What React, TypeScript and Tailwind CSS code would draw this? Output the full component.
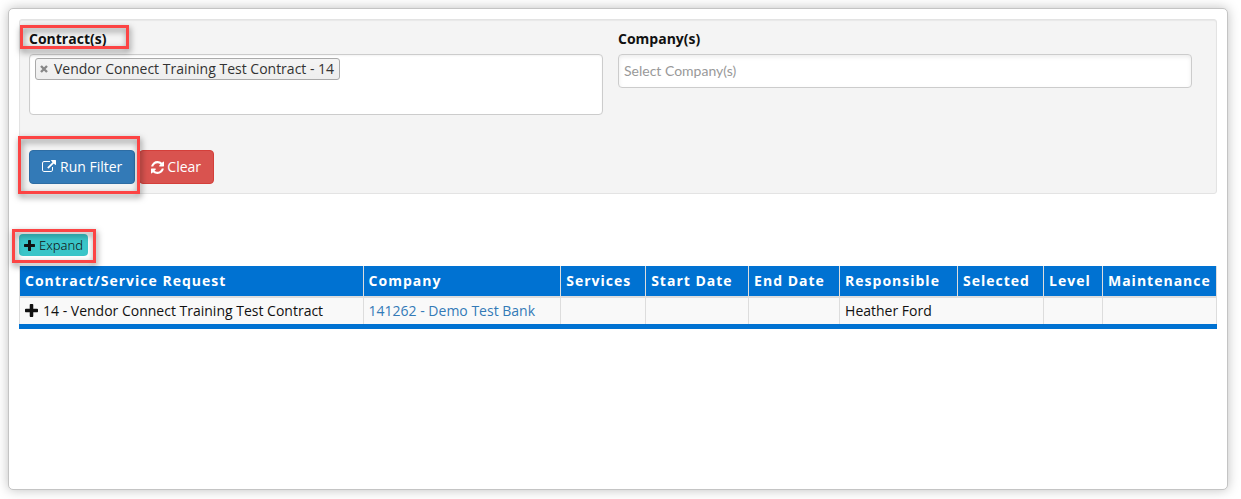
import React, { useState } from "react";

type IconProps = { className?: string };

function PlusIcon({ className }: IconProps) {
  return (
    <svg viewBox="192 128 1408 1408" className={className} fill="currentColor" aria-hidden="true">
      <path d="M1600 736v192q0 40-28 68t-68 28h-416v416q0 40-28 68t-68 28h-192q-40 0-68-28t-28-68v-416h-416q-40 0-68-28t-28-68v-192q0-40 28-68t68-28h416v-416q0-40 28-68t68-28h192q40 0 68 28t28 68v416h416q40 0 68 28t28 68z" />
    </svg>
  );
}

function RefreshIcon({ className }: IconProps) {
  return (
    <svg viewBox="128 128 1536 1536" className={className} fill="currentColor" aria-hidden="true">
      <path d="M1639 1056q0 5-1 7-64 268-268 434.500t-478 166.500q-146 0-282.500-55t-243.500-157l-129 129q-19 19-45 19t-45-19-19-45v-448q0-26 19-45t45-19h448q26 0 45 19t19 45-19 45l-137 137q71 66 161 102t187 36q134 0 250-65t186-179q11-17 53-117 8-23 30-23h192q13 0 22.500 9.500t9.500 22.500zm25-800v448q0 26-19 45t-45 19h-448q-26 0-45-19t-19-45 19-45l138-138q-148-137-349-137-134 0-250 65t-186 179q-11 17-53 117-8 23-30 23h-199q-13 0-22.500-9.500t-9.500-22.500v-7q65-268 270-434.500t480-166.500q146 0 284 55.500t245 156.500l130-129q19-19 45-19t45 19 19 45z" />
    </svg>
  );
}

function ExternalLinkIcon({ className }: IconProps) {
  return (
    <svg viewBox="0 0 1792 1792" className={className} fill="currentColor" aria-hidden="true">
      <path d="M1408 928v320q0 119-84.500 203.500t-203.500 84.500h-832q-119 0-203.500-84.500t-84.500-203.500v-832q0-119 84.500-203.500t203.500-84.500h704q14 0 23 9t9 23v64q0 14-9 23t-23 9h-704q-66 0-113 47t-47 113v832q0 66 47 113t113 47h832q66 0 113-47t47-113v-320q0-14 9-23t23-9h64q14 0 23 9t9 23zm384-864v512q0 26-19 45t-45 19-45-19l-176-176-652 652q-10 10-23 10t-23-10l-114-114q-10-10-10-23t10-23l652-652-176-176q-19-19-19-45t19-45 45-19h512q26 0 45 19t19 45z" />
    </svg>
  );
}

function CrossIcon({ className }: IconProps) {
  return (
    <svg viewBox="0 0 8 8" className={className} aria-hidden="true">
      <path d="M1 1l6 6M7 1l-6 6" stroke="currentColor" strokeWidth="2.400" fill="none" />
    </svg>
  );
}

const callout =
  "pointer-events-none absolute z-10 border-3 border-[#fc4444] drop-shadow-[1px_3px_3px_rgba(0,0,0,0.5)]";

const columns = [
  { title: "Contract/Service Request", width: "w-[344px]" },
  { title: "Company", width: "w-[198px]" },
  { title: "Services", width: "w-[85px]" },
  { title: "Start Date", width: "w-[103px]" },
  { title: "End Date", width: "w-[91px]" },
  { title: "Responsible", width: "w-[118px]" },
  { title: "Selected", width: "w-[86px]" },
  { title: "Level", width: "w-[59px]" },
  { title: "Maintenance", width: "w-[114px]" },
];

const cell = "border-x border-[#ddd] px-[5px]";

export default function App() {
  const [contracts, setContracts] = useState(["Vendor Connect Training Test Contract - 14"]);

  return (
    <div className="flex min-h-screen bg-white pt-2 pr-[13px] pb-[9px] pl-2 font-['Open_Sans',sans-serif] text-sm leading-5 text-[#111]">
      <main className="min-w-0 flex-1 rounded-[5px] border border-[#c4c4c4] bg-white p-2.5 shadow-[0_0_12px_rgba(0,0,0,0.25)]">
        <form
          className="rounded-[3px] border border-[#e3e3e3] bg-[#f4f4f4] pt-[9px] pr-6 pb-[9px] pl-[9px] shadow-[inset_0_1px_1px_rgba(0,0,0,0.05)]"
          onSubmit={(e) => e.preventDefault()}
        >
          <div className="grid grid-cols-2 gap-[15px]">
            <div>
              <div className="relative mb-[5px] w-fit">
                <label htmlFor="contracts" className="block font-bold">
                  Contract(s)
                </label>
                <span className={`${callout} -top-1 -right-[23px] bottom-0 -left-[9px]`} />
              </div>
              <div className="flex min-h-[61px] flex-wrap items-start rounded-[4px] border border-[#ccc] bg-white px-[5px] py-[3px] shadow-[inset_0_1px_2px_rgba(0,0,0,0.05)]">
                {contracts.map((name) => (
                  <span
                    key={name}
                    className="flex h-[22px] items-center gap-1.5 rounded-[3px] border border-[#aaa] bg-linear-to-b from-[#f4f4f4] to-[#eee] pr-[5px] pl-1 text-[#333]"
                  >
                    <button
                      type="button"
                      aria-label={`Remove ${name}`}
                      className="text-[#888]"
                      onClick={() => setContracts(contracts.filter((c) => c !== name))}
                    >
                      <CrossIcon className="size-2" />
                    </button>
                    {name}
                  </span>
                ))}
                <input id="contracts" type="text" className="h-[21px] w-10 bg-transparent px-1 outline-none" />
              </div>
            </div>
            <div>
              <label htmlFor="companies" className="mb-[5px] block w-fit font-bold">
                Company(s)
              </label>
              <input
                id="companies"
                type="text"
                placeholder="Select Company(s)"
                className="h-[34px] w-full rounded-[4px] border border-[#ccc] bg-white px-[5px] pb-0.5 font-['Lato',sans-serif] shadow-[inset_0_2px_4px_rgba(0,0,0,0.08)] outline-none placeholder:text-[#999]"
              />
            </div>
          </div>
          <div className="mt-[35px] flex gap-1">
            <div className="relative">
              <button
                type="submit"
                className="flex h-[34px] items-center gap-1 rounded-[4px] border border-[#2e6da4] bg-[#337ab7] px-3 text-white"
              >
                <ExternalLinkIcon className="size-3.5" />
                Run Filter
              </button>
              <span className={`${callout} -top-3.5 -right-[5px] -bottom-2.5 -left-[11px]`} />
            </div>
            <button
              type="reset"
              className="flex h-[34px] items-center gap-[3px] rounded-[4px] border border-[#d43f3a] bg-[#d9534f] pr-3 pl-[11px] text-white"
              onClick={() => setContracts([])}
            >
              <RefreshIcon className="size-[13px]" />
              Clear
            </button>
          </div>
        </form>

        <div className="relative mt-10 w-fit">
          <button
            type="button"
            className="flex h-[22px] items-center gap-1 rounded-[4px] bg-[#3ac5c8] px-[5px] font-['Noto_Sans',sans-serif] text-[13px] font-light"
          >
            <PlusIcon className="size-[11px]" />
            Expand
          </button>
          <span className={`${callout} -top-[5px] -right-2 -bottom-[7px] -left-[7px]`} />
        </div>

        <table className="mt-2.5 w-full border-collapse border-b-5 border-[#0072d2] bg-[#f9f9f9]">
          <thead>
            <tr className="h-[31px] border-b-2 border-[#ddd] bg-[#0072d2] text-left tracking-[1px] text-white">
              {columns.map((c) => (
                <th key={c.title} scope="col" className={`${cell} ${c.width} whitespace-nowrap font-bold`}>
                  {c.title}
                </th>
              ))}
            </tr>
          </thead>
          <tbody>
            <tr className="h-[29px]">
              <td className={cell}>
                <span className="flex items-center gap-[5px]">
                  <button type="button" aria-label="Expand contract 14">
                    <PlusIcon className="size-[13px]" />
                  </button>
                  14 - Vendor Connect Training Test Contract
                </span>
              </td>
              <td className={cell}>
                <a href="#company-141262" className="text-[#337ab7]">
                  141262 - Demo Test Bank
                </a>
              </td>
              <td className={cell} />
              <td className={cell} />
              <td className={cell} />
              <td className={cell} colSpan={2}>
                Heather Ford
              </td>
              <td className={cell} />
              <td className={cell} />
            </tr>
          </tbody>
        </table>
      </main>
    </div>
  );
}
